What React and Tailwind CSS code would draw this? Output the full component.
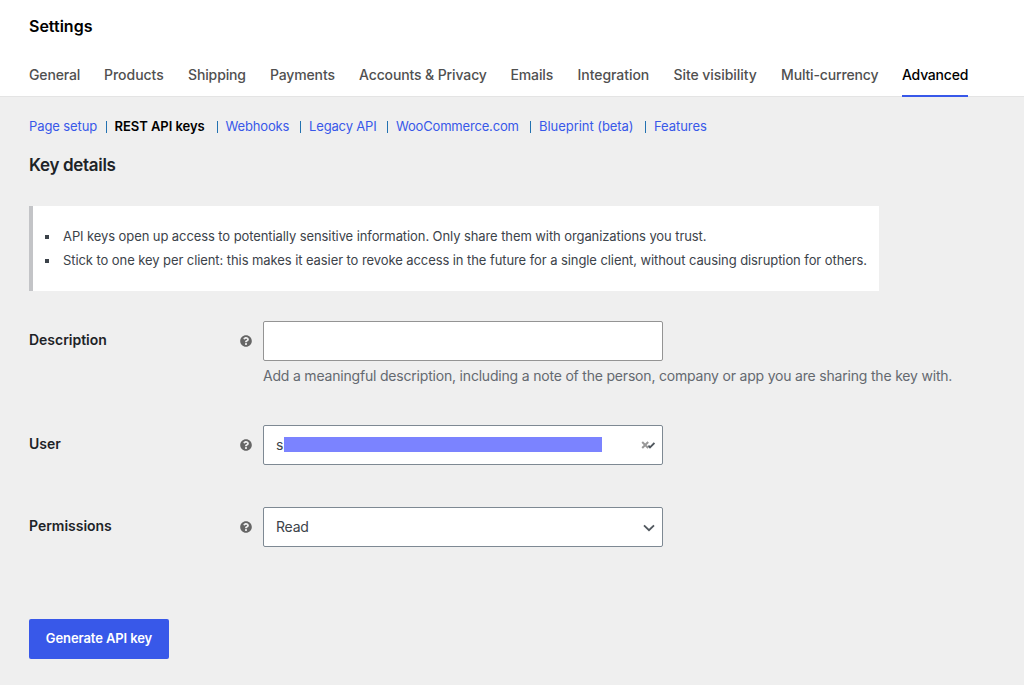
import { FaQuestionCircle } from 'react-icons/fa'

const TABS = [
  { label: 'General', className: 'w-[51px] tracking-[-0.13px]' },
  { label: 'Products', className: 'w-[60px] tracking-[-0.02px]' },
  { label: 'Shipping', className: 'w-[58px] tracking-[-0.13px]' },
  { label: 'Payments', className: 'w-[65px] tracking-[-0.15px]' },
  { label: 'Accounts & Privacy', className: 'w-[127.5px] tracking-[-0.12px]' },
  { label: 'Emails', className: 'w-[43px] tracking-[-0.15px]' },
  { label: 'Integration', className: 'w-[72px] tracking-[-0.05px]' },
  { label: 'Site visibility', className: 'w-[83.5px] tracking-[-0.06px]' },
  { label: 'Multi-currency', className: 'w-[97px] tracking-[-0.15px]' },
  { label: 'Advanced', className: 'w-[66px] tracking-[-0.22px]', active: true },
]

const SECTIONS = [
  { label: 'Page setup', className: 'w-[85.5px] tracking-[-0.1px]' },
  { label: 'REST API keys', className: 'w-[111px] tracking-[-0.05px]', active: true },
  { label: 'Webhooks', className: 'w-[83.5px] tracking-[-0.15px]' },
  { label: 'Legacy API', className: 'w-[87px] tracking-[-0.15px]' },
  { label: 'WooCommerce.com', className: 'w-[143px] tracking-[-0.18px]' },
  { label: 'Blueprint (beta)', className: 'w-[115px] tracking-[-0.05px]' },
  { label: 'Features', className: 'w-[60px] tracking-[-0.05px]' },
]

function Chevron() {
  return (
    <svg viewBox="0 0 12 8" className="mt-px h-2 w-3" fill="none" stroke="#50575e" strokeWidth="1.8">
      <path d="M1 1.3 6 6.2 11 1.3" />
    </svg>
  )
}

function ClearChevron() {
  return (
    <svg viewBox="0 0 14 8" className="h-2 w-3.5" fill="none">
      <path d="M7.4 4.6 9 6.4 13.4 2" stroke="#50575e" strokeWidth="1.8" />
      <path d="M1.2 1 7.2 7M7.2 1 1.2 7" stroke="#999" strokeWidth="2" />
    </svg>
  )
}

function Row({ label, className, children }) {
  return (
    <div className={`flex ${className}`}>
      <div className="flex h-10 w-[234px] shrink-0 items-center justify-between pr-[11.5px]">
        <label className="pb-0.5 text-sm font-semibold tracking-[-0.02px] text-[#1d2327]">{label}</label>
        <FaQuestionCircle className="mb-px size-3 text-[#666]" />
      </div>
      <div>{children}</div>
    </div>
  )
}

export default function App() {
  return (
    <div className="h-[685px] overflow-hidden bg-[#efefef] font-['Inter',sans-serif]">
      <header className="h-[97px] border-b border-[#e4e4e4] bg-white px-[29px]">
        <h1 className="pt-4 text-base leading-5 font-semibold text-black">Settings</h1>
        <nav className="mt-[18px] flex h-[43px] gap-6">
          {TABS.map((tab) => (
            <a
              key={tab.label}
              className={`shrink-0 pt-[11px] text-sm leading-5 font-medium whitespace-nowrap ${tab.className} ${
                tab.active ? 'border-b-2 border-[#3858e9] text-black' : 'text-[#505050]'
              }`}
            >
              {tab.label}
            </a>
          ))}
        </nav>
      </header>

      <main className="px-[29px]">
        <ul className="flex h-[60px] pt-[19px] text-[13px] leading-5">
          {SECTIONS.map((section, i) => (
            <li key={section.label} className={`flex shrink-0 whitespace-nowrap ${section.className}`}>
              <a className={`flex-1 ${section.active ? 'font-semibold text-black' : 'text-[#3858e9]'}`}>
                {section.label}
              </a>
              {i < SECTIONS.length - 1 && <span className="mt-[5px] mr-2 h-3 w-px bg-[#2271b1]" />}
            </li>
          ))}
        </ul>

        <h2 className="text-[17px] leading-4 font-semibold tracking-[-0.32px] text-[#1d2327]">Key details</h2>

        <div className="mt-[33px] h-[85px] w-[850px] border-l-4 border-[#c3c4c7] bg-white pt-[18px]">
          <ul className="text-[13px] leading-6 tracking-[-0.09px] whitespace-nowrap text-[#3c434a]">
            <li className="flex items-center">
              <span className="mt-0.5 mr-3.5 ml-3 size-1 bg-[#3c434a]" />
              <span>API keys open up access to potentially sensitive information. Only share them with organizations you trust.</span>
            </li>
            <li className="flex items-center tracking-[-0.08px]">
              <span className="mt-0.5 mr-3.5 ml-3 size-1 bg-[#3c434a]" />
              <span>
                Stick to one key per client: this makes it easier to revoke access in the future for a single client, without causing disruption for others.
              </span>
            </li>
          </ul>
        </div>

        <Row label="Description" className="mt-[30px] h-[104px]">
          <input className="block h-10 w-[400px] rounded-[2px] border border-[#949494] bg-white px-3 text-sm" />
          <p className="mt-[5px] text-sm leading-5 tracking-[-0.195px] whitespace-nowrap text-[#646970]">
            Add a meaningful description, including a note of the person, company or app you are sharing the key with.
          </p>
        </Row>

        <Row label="User" className="h-[82px]">
          <div className="flex h-10 w-[400px] items-center rounded-[2px] border border-[#7e8993] bg-white pr-[7px] pl-3 text-sm text-[#3c434a]">
            <span>si</span>
            <span className="relative mb-px -ml-[3px] h-[15px] w-[318px] bg-[#7b83ff]" />
            <span className="ml-auto">
              <ClearChevron />
            </span>
          </div>
        </Row>

        <Row label="Permissions" className="h-28">
          <div className="flex h-10 w-[400px] items-center justify-between rounded-[2px] border border-[#7e8993] bg-white pr-[7px] pl-3 text-sm text-[#3c434a]">
            <span className="tracking-[-0.2px]">Read</span>
            <Chevron />
          </div>
        </Row>

        <button className="h-10 w-[140px] rounded-[2px] bg-[#3858e9] text-[13px] font-semibold tracking-[-0.1px] whitespace-nowrap text-white">
          Generate API key
        </button>
      </main>
    </div>
  )
}
